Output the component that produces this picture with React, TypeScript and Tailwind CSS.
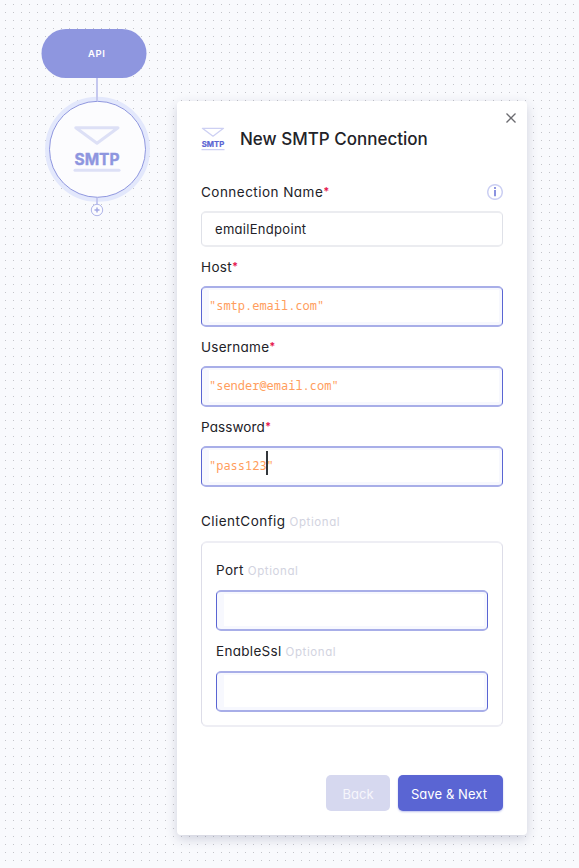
import React from "react";

const ink = "text-[#222228]";

function Label({ text, spacing, required, optional }: { text: string; spacing: string; required?: boolean; optional?: boolean }) {
  return (
    <div className={`flex h-[20px] items-baseline whitespace-nowrap text-[13.5px] leading-[20px] ${ink}`}>
      <span className={spacing}>{text}</span>
      {required && <span className="relative -top-[2px] text-[11px] font-bold leading-[16px] text-[#e6194f]">*</span>}
      {optional && <span className="ml-[4px] text-[11.5px] tracking-[0.6px] text-[#d2d3e0]">Optional</span>}
    </div>
  );
}

function Editor({ value, caret }: { value?: string; caret?: boolean }) {
  return (
    <div className="h-[41px] rounded-[5px] border-x border-y-2 border-x-[#5a65d3] border-y-[#a8aee8] bg-[#f7f8fe] pt-[2px] pr-[3px] pb-[3px] pl-[7px]">
      <div className="flex h-full items-center bg-white font-['Noto_Sans_Mono','Droid_Sans_Mono','DejaVu_Sans_Mono',monospace] text-[12px] leading-[16px] text-[#ff9d5c]">
        {value && <span>{value}</span>}
        {caret && (
          <>
            <span className="-ml-px -mr-px -mt-[7px] h-[24px] w-[2px] bg-[#33373b]" />
            <span>"</span>
          </>
        )}
      </div>
    </div>
  );
}

function Envelope({ className, textFill, line, width }: { className: string; textFill: string; line: string; width: number }) {
  return (
    <svg className={className} viewBox="0 0 48 48" fill="none">
      <path d="M2.8 2.7H45L24 18.3Z" stroke={line} strokeWidth={width} strokeLinejoin="round" />
      <text x="1.5" y="39.5" textLength="45" lengthAdjust="spacingAndGlyphs" fontSize="15.5" fontWeight="700" stroke={textFill} strokeWidth="0.4" fill={textFill} fontFamily="Inter, sans-serif">
        SMTP
      </text>
      <path d="M2 45.3H46" stroke={line} strokeWidth={width} strokeLinecap="round" />
    </svg>
  );
}

export default function App() {
  return (
    <div className="relative h-[868px] w-[579px] overflow-hidden bg-[#f9fafd] font-['Inter','Open_Sans',sans-serif] [font-feature-settings:'cv11']">
      <svg className="absolute inset-0 h-full w-full">
        <defs>
          <pattern id="dots" width="8" height="8" patternUnits="userSpaceOnUse">
            <rect x="5" y="4" width="1" height="1" fill="#c4c5ca" />
          </pattern>
        </defs>
        <rect width="579" height="868" fill="url(#dots)" />
        <rect x="41.5" y="29" width="105" height="49" rx="24.5" fill="#8e96df" />
        <circle cx="97.5" cy="149.3" r="50.2" stroke="#e3e8fc" strokeWidth="4.5" fill="none" />
        <circle cx="97.5" cy="149.3" r="48" stroke="#8e96df" fill="#fcfcfe" />
        <path d="M97 78V101M97 198V204" stroke="#c5c8ef" strokeWidth="2" />
        <circle cx="97" cy="210" r="5.7" stroke="#b0b6e9" fill="#fcfcfe" />
        <path d="M94.5 210H99.5M97 207.5V212.5" stroke="#a0a6e4" strokeWidth="1.4" />
        <text x="88" y="57" textLength="17" fontSize="9.5" fontWeight="600" fill="white" fontFamily="Inter, sans-serif">API</text>
      </svg>
      <Envelope className="absolute left-[73px] top-[125px] h-[48px] w-[48px]" textFill="#8e96df" line="#dde0f6" width={3} />

      <div className="absolute left-[177px] top-[101px] flex h-[734px] w-[350px] flex-col rounded-[4px] bg-white px-6 shadow-[0_4px_12px_rgba(40,45,90,0.2)]">
        <svg className="absolute right-[11px] top-[12px] h-[10px] w-[10px]" viewBox="0 0 10 10">
          <path d="M0.5 0.5L9.5 9.5M9.5 0.5L0.5 9.5" stroke="#6b6b70" strokeWidth="1.3" />
        </svg>
        <div className="mt-[26px] flex h-[24px] items-center">
          <Envelope className="h-[24px] w-[24px]" textFill="#5a65d3" line="#cdd0f3" width={2.6} />
          <h1 className={`ml-[15px] whitespace-nowrap text-[17px] font-medium leading-[24px] ${ink}`}>New SMTP Connection</h1>
        </div>
        <div className="mt-[31px] flex h-[20px] items-center justify-between">
          <Label text="Connection Name" spacing="tracking-[0.47px]" required />
          <svg className="h-[16px] w-[16px]" viewBox="0 0 16 16">
            <circle cx="8" cy="8" r="7.3" fill="none" stroke="#ccd0f3" strokeWidth="1.5" />
            <path d="M8 6V12.2" stroke="#5a65d3" strokeWidth="1.4" />
            <circle cx="8" cy="4" r="0.9" fill="#5a65d3" />
          </svg>
        </div>
        <div className={`mt-[9px] flex h-[36px] items-center rounded-[5px] border-x border-y-2 border-x-[#dfe1e8] border-y-[#ebecf0] px-[13px] pt-px text-[13px] tracking-[0.3px] ${ink}`}>emailEndpoint</div>
        <div className="mt-[10px]"><Label text="Host" spacing="tracking-[0.35px]" required /></div>
        <div className="mt-[9px]"><Editor value={'"smtp.email.com"'} /></div>
        <div className="mt-[10px]"><Label text="Username" spacing="tracking-[0.25px]" required /></div>
        <div className="mt-[9px]"><Editor value={'"sender@email.com"'} /></div>
        <div className="mt-[10px]"><Label text="Password" spacing="tracking-[0.1px]" required /></div>
        <div className="mt-[9px]"><Editor value={'"pass123'} caret /></div>
        <div className="mt-[24px]"><Label text="ClientConfig" spacing="tracking-[0.45px]" optional /></div>
        <div className="mt-[10px] h-[186px] rounded-[6px] border-x border-y-2 border-x-[#dddde8] border-y-[#eeeef4] px-[14px] pt-[17px]">
          <Label text="Port" spacing="tracking-[0.35px]" optional />
          <div className="mt-[10px]"><Editor /></div>
          <div className="mt-[10px]"><Label text="EnableSsl" spacing="tracking-[0.3px]" optional /></div>
          <div className="mt-[10px]"><Editor /></div>
        </div>
        <div className="mt-[48px] flex justify-end gap-2 text-[13px]">
          <button className="h-[36px] w-[64px] rounded-[5px] bg-[#d6d8ef] pt-[4px] text-[#f6f6fc]">Back</button>
          <button className="h-[36px] w-[105px] rounded-[5px] bg-[#5a65d3] pt-[4px] pr-[3px] tracking-[0.08px] text-white shadow-[0_1px_2px_rgba(90,101,211,0.4)]">Save &amp; Next</button>
        </div>
      </div>
    </div>
  );
}
